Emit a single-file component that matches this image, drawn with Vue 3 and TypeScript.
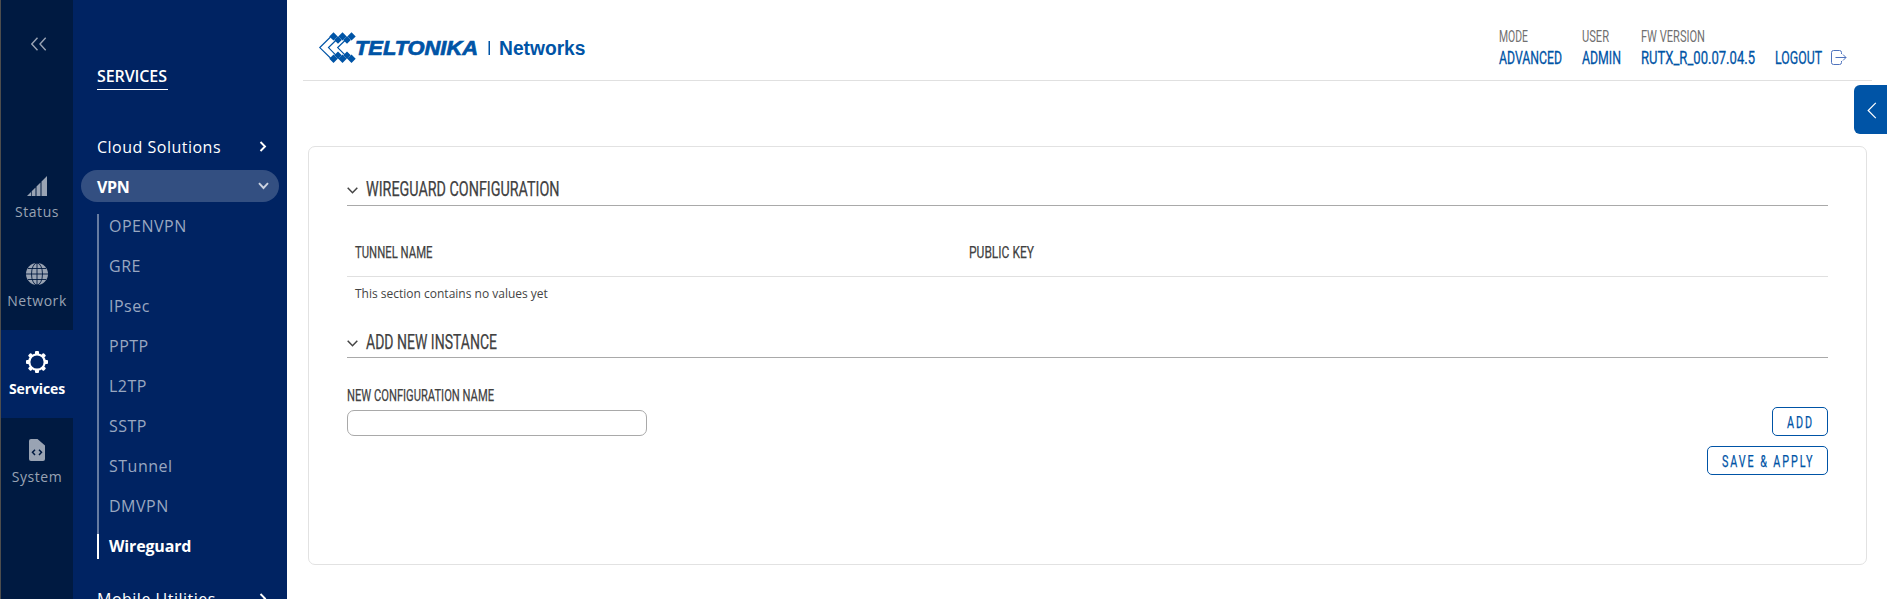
<script setup lang="ts">
import { h } from 'vue'

interface FitProps { text: string; w: number; cap: number }

// Single-line label squeezed to a narrow display width; cap is the capital height in px.
const FitText = (p: FitProps) =>
  h('svg', { class: 'fit', width: p.w, height: p.cap }, [
    h('text', {
      x: 0, y: p.cap, 'font-size': p.cap / 0.711,
      textLength: p.w, lengthAdjust: 'spacingAndGlyphs',
    }, p.text),
  ])
FitText.props = ['text', 'w', 'cap']

const rail = [
  { id: 'status', label: 'Status' },
  { id: 'network', label: 'Network' },
  { id: 'services', label: 'Services' },
  { id: 'system', label: 'System' },
]
const vpnItems = ['OPENVPN', 'GRE', 'IPsec', 'PPTP', 'L2TP', 'SSTP', 'STunnel', 'DMVPN', 'Wireguard']
const info = [
  { label: 'MODE', lw: 29, value: 'ADVANCED', w: 63 },
  { label: 'USER', lw: 27, value: 'ADMIN', w: 39 },
  { label: 'FW VERSION', lw: 64, value: 'RUTX_R_00.07.04.5', w: 114 },
]
const teeth = [0, 45, 90, 135, 180, 225, 270, 315]
const diamonds = [14.5, 23.5, 32.5]
</script>

<template>
  <div class="app">
    <nav class="rail">
      <div class="collapse">
        <svg width="16" height="14" viewBox="0 0 16 14"><path d="M6.500 .8.8 7l5.700 6.200M14.700.8 9 7l5.700 6.200" /></svg>
      </div>
      <div v-for="r in rail" :key="r.id" class="rail-item" :class="[r.id, { active: r.id === 'services' }]">
        <svg v-if="r.id === 'status'" width="22" height="22" viewBox="0 0 22 22" class="solid">
          <path d="M1 21 5 17v4zM5.700 16.300l3.800-3.800V21H5.700zM10.500 11.500l4-4V21h-4zM15.500 6.500 21 1v20h-5.500z" />
        </svg>
        <svg v-else-if="r.id === 'network'" width="22" height="22" viewBox="0 0 22 22">
          <circle cx="11" cy="11" r="11" class="fill" />
          <path d="M11 0v22M0 11h22M2 5.500h18M2 16.500h18" class="cut" />
          <ellipse cx="11" cy="11" rx="5.500" ry="11" class="cut" />
        </svg>
        <svg v-else-if="r.id === 'services'" width="22" height="22" viewBox="0 0 22 22" class="solid">
          <rect v-for="t in teeth" :key="t" x="9" y="0" width="4" height="5" rx="1" :transform="`rotate(${t} 11 11)`" />
          <circle cx="11" cy="11" r="7.700" class="gear" />
        </svg>
        <svg v-else width="22" height="22" viewBox="0 0 22 22">
          <path d="M5 0h6.500L19 6.500V20a2 2 0 0 1-2 2H5a2 2 0 0 1-2-2V2a2 2 0 0 1 2-2z" class="fill" />
          <path d="M9 10.700 6.500 13.300 9 15.900M13 10.700l2.500 2.600-2.500 2.600" class="code" />
        </svg>
        <span>{{ r.label }}</span>
      </div>
    </nav>

    <aside class="menu">
      <h2>SERVICES</h2>
      <div class="entry">
        <span>Cloud Solutions</span>
        <svg width="8" height="11" viewBox="0 0 8 11"><path d="m1.500 1 4.500 4.500L1.500 10" /></svg>
      </div>
      <div class="entry open">
        <span>VPN</span>
        <svg width="11" height="8" viewBox="0 0 11 8"><path d="M1 1.200 5.500 6 10 1.200" /></svg>
      </div>
      <ul>
        <li v-for="v in vpnItems" :key="v" :class="{ current: v === 'Wireguard' }">{{ v }}</li>
      </ul>
      <div class="entry last">
        <span>Mobile Utilities</span>
        <svg width="8" height="11" viewBox="0 0 8 11"><path d="m1.500 1 4.500 4.500L1.500 10" /></svg>
      </div>
    </aside>

    <main>
      <header>
        <svg class="logo" width="268" height="32" viewBox="0 0 268 32">
          <path class="arrow" d="M11.500 5 .8 15.600 14.500 29" />
          <path class="arrow" d="M17 9.200 9.200 15.900 19.500 26.500M14 6.500 5.500 14.800" stroke-opacity="0" />
          <path class="arrow" d="M18.500 6.800 9.500 15.600 20.500 26.800" />
          <path class="arrow" d="M27.500 7 18.700 15.600 29.500 26.500" />
          <path class="tile" v-for="x in diamonds" :key="x" :d="`M${x} .2l4.200 4.200-4.200 4.200-4.200-4.200zM${x} 22.500l4.200 4.200-4.200 4.200-4.200-4.200z`" />
          <path class="tile" d="m19 4.200 3.800 3.800-3.800 3.800-3.800-3.800zM28 4.200l3.800 3.800-3.800 3.800-3.800-3.800zM19 19.500l3.800 3.800-3.800 3.800-3.800-3.800zM28 19.500l3.800 3.800-3.800 3.800-3.800-3.800z" />
          <text x="36" y="23" class="brand" textLength="123" lengthAdjust="spacingAndGlyphs">TELTONIKA</text>
          <path class="tile" d="M169.500 9h1.500v14h-1.500z" />
          <text x="180" y="23" class="division" textLength="86.500" lengthAdjust="spacingAndGlyphs">Networks</text>
        </svg>
        <div class="info">
          <div v-for="i in info" :key="i.label" class="info-col">
            <FitText class="muted" :text="i.label" :w="i.lw" :cap="12" />
            <FitText class="blue" :text="i.value" :w="i.w" :cap="13.500" />
          </div>
          <div class="logout">
            <FitText class="blue" text="LOGOUT" :w="47" :cap="13.500" />
            <svg width="16" height="16" viewBox="0 0 16 16"><path d="M10.500 4V2.500q0-2-2-2h-6q-2 0-2 2v10q0 2 2 2h6q2 0 2-2V11M4.500 7.500H15M12 4.500l3 3-3 3" /></svg>
          </div>
        </div>
      </header>

      <section class="card">
        <div class="heading first">
          <svg width="11" height="7" viewBox="0 0 11 7"><path d="M.7.7 5.500 5.700 10.300.7" /></svg>
          <FitText text="WIREGUARD CONFIGURATION" :w="193.500" :cap="14.700" />
        </div>
        <div class="thead">
          <FitText text="TUNNEL NAME" :w="77.500" :cap="12.200" />
          <FitText text="PUBLIC KEY" :w="65" :cap="12.200" />
        </div>
        <p class="empty">This section contains no values yet</p>
        <div class="heading">
          <svg width="11" height="7" viewBox="0 0 11 7"><path d="M.7.7 5.500 5.700 10.300.7" /></svg>
          <FitText text="ADD NEW INSTANCE" :w="131" :cap="14.700" />
        </div>
        <div class="form">
          <label>
            <FitText text="NEW CONFIGURATION NAME" :w="147" :cap="12.200" />
            <input type="text" />
          </label>
          <div class="actions">
            <button class="add"><FitText text="ADD" :w="27" :cap="12" /></button>
            <button class="save"><FitText text="SAVE &amp; APPLY" :w="92.500" :cap="12" /></button>
          </div>
        </div>
      </section>
    </main>
    <div class="drawer-tab">
      <svg width="10" height="17" viewBox="0 0 10 17"><path d="M8.800.8 1.200 8.500l7.600 7.700" /></svg>
    </div>
  </div>
</template>

<style>
body { margin: 0; overflow: hidden; }
</style>

<style scoped>
* { box-sizing: border-box; }
.app { position: relative; display: flex; height: 599px; overflow: hidden; background: #fff; font-family: "Open Sans", "Noto Sans", sans-serif; color: #444; }
svg { display: block; flex: none; fill: none; }
.fit { overflow: visible; font-family: Roboto, sans-serif; fill: #414141; stroke: #414141; stroke-width: .25; }

.rail { width: 73px; flex: none; background: #001a41; border-left: 1px solid #4d4d4d; color: #99a3b3; font-size: 14px; letter-spacing: .55px; }
.collapse { height: 154px; padding: 37px 0 0 30px; }
.collapse path { stroke: #99a3b3; stroke-width: 1.400; }
.rail-item { height: 88px; padding-top: 21px; display: flex; flex-direction: column; align-items: center; }
.rail-item span { margin-top: 6px; line-height: 20px; }
.rail-item.status span { margin-top: 5px; }
.rail-item.active { background: #002362; color: #fff; font-weight: 700; letter-spacing: -.1px; }
.solid, .fill { fill: #99a3b3; }
.active .solid { fill: #fff; }
.cut { stroke: #001a41; stroke-width: .9; fill: none; }
.code { stroke: #001a41; stroke-width: 1.500; }
.gear { fill: #002362; stroke: #fff; stroke-width: 2.200; }

.menu { width: 214px; flex: none; background: #002362; color: #fff; font-size: 16px; letter-spacing: .5px; padding: 65px 8px 0; }
h2 { margin: 0 0 0 16px; width: 71px; height: 25px; line-height: 22px; font-size: 16px; font-weight: 600; letter-spacing: -.1px; border-bottom: 1px solid #fff; }
.entry { height: 32px; display: flex; align-items: center; justify-content: space-between; padding: 0 12px 0 16px; margin-top: 41px; }
.entry svg { margin-top: -2px; }
.entry svg path { stroke: #fff; stroke-width: 1.900; }
.entry.open { margin-top: 7px; padding: 1px 10px 0 16px; background: #334f81; border-radius: 16px; font-weight: 700; letter-spacing: -.3px; }
.entry.open path { stroke: #ccd3e0; }
ul { list-style: none; margin: 12px 0 0 16px; padding: 0; height: 345px; }
li { height: 40px; line-height: 24px; padding-left: 10px; border-left: 2px solid #667ba1; color: #99a7c0; }
li.current { height: 25px; color: #fff; border-color: #fff; font-weight: 700; letter-spacing: -.15px; }
.entry.last { margin-top: 24px; }

main { flex: 1; min-width: 0; padding: 0 15px 0 16px; }
header { height: 81px; border-bottom: 1px solid #e0e0e0; display: flex; justify-content: space-between; padding: 0 25.500px 0 16px; }
.logo { margin-top: 32px; overflow: visible; }
.tile { fill: #0054a6; }
.arrow { stroke: #0054a6; stroke-width: 1.200; }
.brand, .division { fill: #0054a6; font-family: "Liberation Sans", Arial, sans-serif; font-weight: 700; font-size: 19.500px; }
.brand { font-style: italic; stroke: #0054a6; stroke-width: .7; }
.info { display: flex; gap: 20px; padding-top: 30px; }
.info-col { display: flex; flex-direction: column; gap: 9px; }
.muted { fill: #707070; stroke: none; }
.blue { fill: #0054a6; stroke: #0054a6; stroke-width: .3; margin-top: -1px; }
.logout { display: flex; gap: 9px; padding-top: 21px; }
.logout path { stroke: #4f73bd; }
.logout svg:last-child { margin-top: -1px; }

.card { margin: 65px 5px 0; height: 419px; border: 1px solid #e2e2e2; border-radius: 7px; padding: 33px 38px 0; }
.heading { height: 26px; display: flex; gap: 8px; padding-top: 1px; border-bottom: 1px solid #a9a9a9; }
.heading svg:first-child { margin-top: 6px; }
.heading path { stroke: #444; stroke-width: 1.500; }
.thead { height: 71px; display: grid; grid-template-columns: 614px 1fr; padding: 40px 0 0 8px; border-bottom: 1px solid #e0e0e0; }
.empty { margin: 8px 0 0 8px; font-size: 12px; line-height: 18px; height: 18px; }
.heading:not(.first) { height: 25px; margin-top: 30px; padding-top: 1px; }
.form { display: flex; justify-content: space-between; padding-top: 31px; }
label { display: flex; flex-direction: column; gap: 9px; }
input { width: 300px; height: 26px; border: 1px solid #a9a9a9; border-radius: 7px; background: #fff; padding: 0 8px; }
.actions { display: flex; flex-direction: column; align-items: flex-end; gap: 10px; padding-top: 18px; }
button { height: 29px; padding: 0 0 0 14px; border: 1px solid #0054a6; border-radius: 5px; background: #fff; }
button .fit { fill: #0054a6; stroke: #0054a6; letter-spacing: 3px; }
.add { width: 56px; }
.save { width: 121px; }
.drawer-tab { position: absolute; right: 0; top: 85px; width: 33px; height: 49px; border-radius: 6px 0 0 6px; background: #0054a6; padding: 17px 0 0 13px; }
.drawer-tab path { stroke: #fff; stroke-width: 1.200; }
</style>
